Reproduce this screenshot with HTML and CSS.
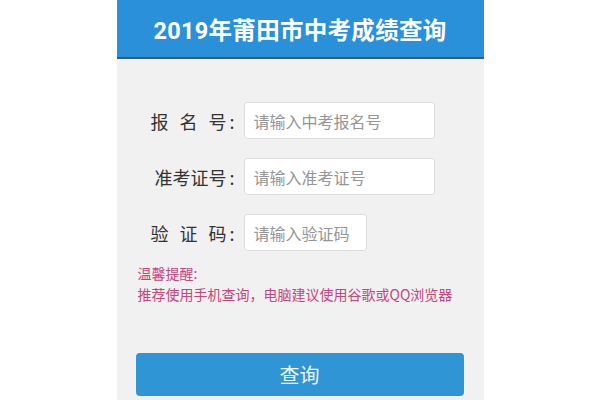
FILE: index.html
```html
<!DOCTYPE html>
<html lang="zh-CN">
<head>
<meta charset="utf-8">
<title>2019年莆田市中考成绩查询</title>
<link rel="stylesheet" href="styles.css">
</head>
<body>
<div class="page">
  <header class="header">2019年莆田市中考成绩查询</header>
  <form class="form">
    <div class="row">
      <label class="label"><span class="spaced">报名</span>号<span class="colon">:</span></label>
      <input class="field" type="text" placeholder="请输入中考报名号">
    </div>
    <div class="row">
      <label class="label">准考证号<span class="colon">:</span></label>
      <input class="field" type="text" placeholder="请输入准考证号">
    </div>
    <div class="row">
      <label class="label"><span class="spaced">验证</span>码<span class="colon">:</span></label>
      <input class="field field-short" type="text" placeholder="请输入验证码">
    </div>
    <div class="tips">
      <div>温馨提醒:</div>
      <div>推荐使用手机查询，电脑建议使用谷歌或QQ浏览器</div>
    </div>
    <button class="btn" type="button">查询</button>
  </form>
</div>
</body>
</html>
```
FILE: styles.css
```css
html, body {
  margin: 0;
  padding: 0;
  background: #ffffff;
}
body {
  font-family: "Noto Sans CJK SC", "Noto Sans", sans-serif;
  color: #333;
}
.page {
  width: 367px;
  height: 400px;
  margin: 0 auto;
  background: #f1f1f1;
  overflow: hidden;
}
.header {
  height: 57px;
  background: #2a90d9;
  border-bottom: 2px solid #3c5a74;
  color: #fff;
  font-family: Roboto, "Noto Sans CJK SC", sans-serif;
  font-weight: bold;
  font-size: 23.5px;
  display: flex;
  align-items: center;
  justify-content: center;
  letter-spacing: 0.3px;
}
.form {
  display: flex;
  flex-direction: column;
  padding-top: 43px;
}
.row {
  display: flex;
  align-items: center;
  height: 37px;
  margin-bottom: 19px;
}
.row:nth-of-type(3) {
  margin-bottom: 0;
}
.label {
  box-sizing: border-box;
  width: 127px;
  padding-right: 9px;
  display: flex;
  justify-content: flex-end;
  align-items: center;
  font-size: 18px;
  color: #333;
  white-space: nowrap;
}
.spaced {
  letter-spacing: 11px;
}
.colon {
  margin-left: 3px;
}
.field {
  box-sizing: border-box;
  width: 191px;
  height: 37px;
  border: 1px solid #dcdcdc;
  border-radius: 3px;
  background: #fff;
  padding: 0 9px;
  font-family: "Noto Sans CJK SC", sans-serif;
  font-size: 16px;
  outline: none;
}
.field::placeholder {
  color: #959595;
}
.field-short {
  width: 123px;
}
.tips {
  margin: 12px 0 0 21px;
  color: #c4467d;
  font-size: 14px;
  line-height: 21px;
}
.btn {
  margin: 48px 20px 0 19px;
  height: 43px;
  border: none;
  border-radius: 4px;
  background: #2f95d4;
  color: #eef6fc;
  font-family: "Noto Sans CJK SC", sans-serif;
  font-size: 20px;
}
```
